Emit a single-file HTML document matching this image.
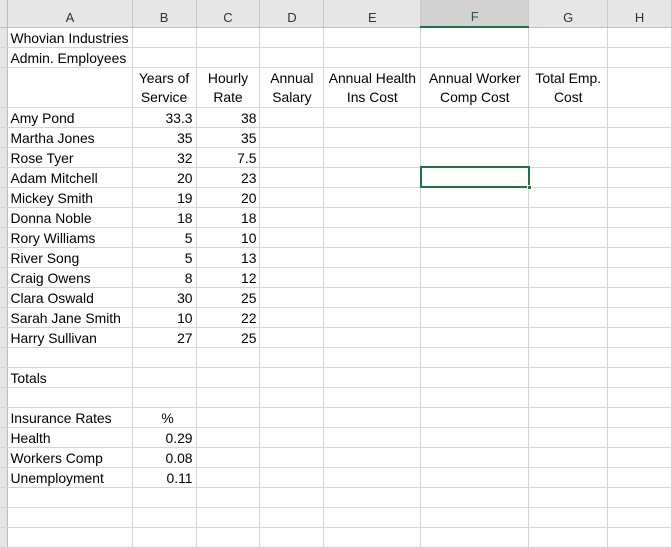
<!DOCTYPE html>
<html><head><meta charset="utf-8"><style>
*{margin:0;padding:0;box-sizing:border-box}
body{width:672px;height:534px;overflow:hidden;background:#fff;font-family:"Liberation Sans",Arial,sans-serif;font-size:13.9px;color:#000;position:relative}
table{border-collapse:collapse;table-layout:fixed;position:absolute;left:0;top:0}
td{border-right:1px solid #d4d4d4;border-bottom:1px solid #d4d4d4;height:20px;padding:0 3px 0 2px;white-space:nowrap;overflow:visible;line-height:18px;vertical-align:bottom}
tr.h td{height:27px;background:#e6e6e6;color:#333;text-align:center;vertical-align:bottom;padding:0;border-right:1px solid #c8c8c8;border-bottom:1px solid #bdbdbd;line-height:19px;font-size:13px}
td.rh{background:#e6e6e6;border-right:1px solid #bdbdbd;padding:0}
.r{text-align:right}.c{text-align:center;padding:0 1px}
tr.t td{height:40px;line-height:19px}
.sel{position:absolute;left:420px;top:166px;width:110px;height:22px;border:2px solid #217346}
.sel i{position:absolute;right:-4px;bottom:-4px;width:5px;height:5px;background:#217346;border:1px solid #fff}
</style></head><body>
<table>
<colgroup><col style="width:8px"><col style="width:124px"><col style="width:64px"><col style="width:64px"><col style="width:64px"><col style="width:97px"><col style="width:108px"><col style="width:79px"><col style="width:64px"></colgroup>
<tr class="h"><td style="border-right:1px solid #bdbdbd"></td><td>A</td><td>B</td><td>C</td><td>D</td><td>E</td><td style="background:#d2d2d2;border-bottom:2px solid #217346;color:#1e5e3a">F</td><td>G</td><td>H</td></tr>
<tr><td class="rh"></td><td>Whovian Industries</td><td></td><td></td><td></td><td></td><td></td><td></td><td></td></tr>
<tr><td class="rh"></td><td>Admin. Employees</td><td></td><td></td><td></td><td></td><td></td><td></td><td></td></tr>
<tr class="t"><td class="rh"></td><td></td><td class="c">Years of<br>Service</td><td class="c">Hourly<br>Rate</td><td class="c">Annual<br>Salary</td><td class="c">Annual Health<br>Ins Cost</td><td class="c">Annual Worker<br>Comp Cost</td><td class="c">Total Emp.<br>Cost</td><td></td></tr>
<tr><td class="rh"></td><td>Amy Pond</td><td class="r">33.3</td><td class="r">38</td><td></td><td></td><td></td><td></td><td></td></tr>
<tr><td class="rh"></td><td>Martha Jones</td><td class="r">35</td><td class="r">35</td><td></td><td></td><td></td><td></td><td></td></tr>
<tr><td class="rh"></td><td>Rose Tyer</td><td class="r">32</td><td class="r">7.5</td><td></td><td></td><td></td><td></td><td></td></tr>
<tr><td class="rh"></td><td>Adam Mitchell</td><td class="r">20</td><td class="r">23</td><td></td><td></td><td></td><td></td><td></td></tr>
<tr><td class="rh"></td><td>Mickey Smith</td><td class="r">19</td><td class="r">20</td><td></td><td></td><td></td><td></td><td></td></tr>
<tr><td class="rh"></td><td>Donna Noble</td><td class="r">18</td><td class="r">18</td><td></td><td></td><td></td><td></td><td></td></tr>
<tr><td class="rh"></td><td>Rory Williams</td><td class="r">5</td><td class="r">10</td><td></td><td></td><td></td><td></td><td></td></tr>
<tr><td class="rh"></td><td>River Song</td><td class="r">5</td><td class="r">13</td><td></td><td></td><td></td><td></td><td></td></tr>
<tr><td class="rh"></td><td>Craig Owens</td><td class="r">8</td><td class="r">12</td><td></td><td></td><td></td><td></td><td></td></tr>
<tr><td class="rh"></td><td>Clara Oswald</td><td class="r">30</td><td class="r">25</td><td></td><td></td><td></td><td></td><td></td></tr>
<tr><td class="rh"></td><td>Sarah Jane Smith</td><td class="r">10</td><td class="r">22</td><td></td><td></td><td></td><td></td><td></td></tr>
<tr><td class="rh"></td><td>Harry Sullivan</td><td class="r">27</td><td class="r">25</td><td></td><td></td><td></td><td></td><td></td></tr>
<tr><td class="rh"></td><td></td><td></td><td></td><td></td><td></td><td></td><td></td><td></td></tr>
<tr><td class="rh"></td><td>Totals</td><td></td><td></td><td></td><td></td><td></td><td></td><td></td></tr>
<tr><td class="rh"></td><td></td><td></td><td></td><td></td><td></td><td></td><td></td><td></td></tr>
<tr><td class="rh"></td><td>Insurance Rates</td><td class="c" style="padding-left:8px">%</td><td></td><td></td><td></td><td></td><td></td><td></td></tr>
<tr><td class="rh"></td><td>Health</td><td class="r">0.29</td><td></td><td></td><td></td><td></td><td></td><td></td></tr>
<tr><td class="rh"></td><td>Workers Comp</td><td class="r">0.08</td><td></td><td></td><td></td><td></td><td></td><td></td></tr>
<tr><td class="rh"></td><td>Unemployment</td><td class="r">0.11</td><td></td><td></td><td></td><td></td><td></td><td></td></tr>
<tr><td class="rh"></td><td></td><td></td><td></td><td></td><td></td><td></td><td></td><td></td></tr>
<tr><td class="rh"></td><td></td><td></td><td></td><td></td><td></td><td></td><td></td><td></td></tr>
<tr><td class="rh"></td><td></td><td></td><td></td><td></td><td></td><td></td><td></td><td></td></tr>
</table>
<div class="sel"><i></i></div>
</body></html>
